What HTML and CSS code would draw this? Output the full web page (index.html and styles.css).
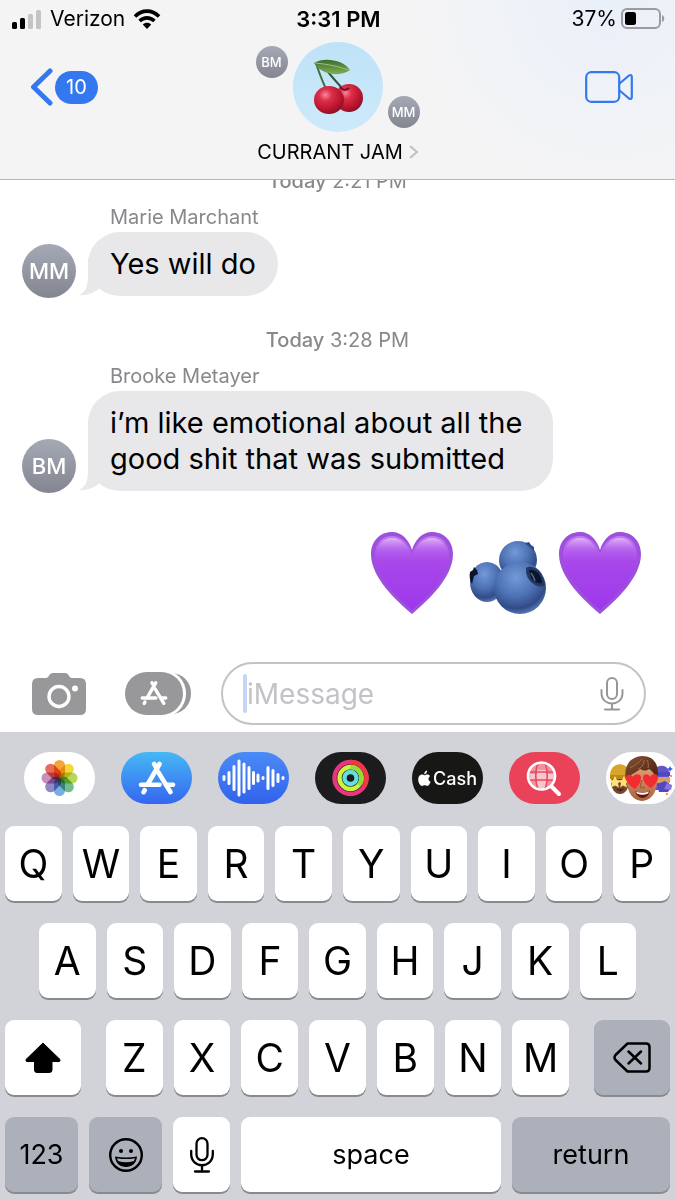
FILE: index.html
```html
<!DOCTYPE html>
<html lang="en">
<head>
    <meta charset="UTF-8">
    <meta name="viewport" content="width=device-width, initial-scale=1.0">
    <title>Messages</title>
    <link rel="stylesheet" href="styles.css">
</head>
<body>
    <svg class="defs" width="0" height="0" aria-hidden="true">
        <defs>
            <linearGradient id="heartFill" x1="0" y1="0" x2="0" y2="1">
                <stop offset="0" stop-color="#c27af0"/>
                <stop offset="0.35" stop-color="#a847ea"/>
                <stop offset="1" stop-color="#9d38ea"/>
            </linearGradient>
            <linearGradient id="heartShine" x1="0" y1="0" x2="0" y2="1">
                <stop offset="0" stop-color="#e3bdf8" stop-opacity="0.9"/>
                <stop offset="0.5" stop-color="#b45cec" stop-opacity="0"/>
            </linearGradient>
            <radialGradient id="berry" cx="0.42" cy="0.3" r="0.7">
                <stop offset="0" stop-color="#7399d8"/>
                <stop offset="0.5" stop-color="#4f74b6"/>
                <stop offset="0.85" stop-color="#324b88"/>
                <stop offset="1" stop-color="#5574b0"/>
            </radialGradient>
            <radialGradient id="cherry" cx="0.38" cy="0.32" r="0.7">
                <stop offset="0" stop-color="#f4899a"/>
                <stop offset="0.3" stop-color="#dd2f49"/>
                <stop offset="0.75" stop-color="#b9142e"/>
                <stop offset="1" stop-color="#8e1029"/>
            </radialGradient>
            <linearGradient id="leaf" x1="0" y1="0" x2="0" y2="1">
                <stop offset="0" stop-color="#3c6b2c"/>
                <stop offset="1" stop-color="#7fae55"/>
            </linearGradient>
            <linearGradient id="face" x1="0" y1="0" x2="0" y2="1">
                <stop offset="0" stop-color="#e8a778"/>
                <stop offset="1" stop-color="#a9623f"/>
            </linearGradient>
            <linearGradient id="hair" x1="0" y1="0" x2="1" y2="1">
                <stop offset="0" stop-color="#885234"/>
                <stop offset="1" stop-color="#43210f"/>
            </linearGradient>
            <symbol id="appstore" viewBox="0 0 38 34">
                <g fill="none" stroke="currentColor" stroke-width="4.6" stroke-linecap="round">
                    <path d="M21.5 3 L9.6 23.5"/>
                    <path d="M16.2 3 L19 7.8"/>
                    <path d="M20.5 11.5 L32.4 31"/>
                    <path d="M3 23.8 H21.5"/>
                    <path d="M29.5 23.8 H35"/>
                    <path d="M6.7 29.2 L5.6 31.2"/>
                </g>
            </symbol>
            <symbol id="heart" viewBox="0 0 82 82">
                <path fill="#9c50dc" d="M41 82 C26 69 0 46 0 22 C0 9 9 0 21 0 C31 0 38 8 41 18 C44 8 51 0 61 0 C73 0 82 9 82 22 C82 46 56 69 41 82 Z"/>
                <path fill="url(#heartFill)" d="M41 78 C27 66 4 45 4 23 C4 11 11 4 21 4 C31 4 38 12 41 22 C44 12 51 4 61 4 C71 4 78 11 78 23 C78 45 55 66 41 78 Z"/>
                <path fill="url(#heartShine)" d="M6 24 C6 12 12 6 21 6 C31 6 37 14 41 25 C45 14 51 6 61 6 C70 6 76 12 76 24 C76 42 6 42 6 24 Z"/>
            </symbol>
        </defs>
    </svg>

    <header class="top">
        <div class="status">
            <div class="status-left">
                <svg class="signal" viewBox="0 0 30 20" aria-hidden="true">
                    <rect x="0" y="13" width="5" height="7" rx="1.5"/>
                    <rect x="8" y="9" width="5" height="11" rx="1.5"/>
                    <rect x="16" y="5" width="5" height="15" rx="1.5" fill="#c4c4c6"/>
                    <rect x="24" y="1" width="5" height="19" rx="1.5" fill="#c4c4c6"/>
                </svg>
                <span>Verizon</span>
                <svg class="wifi" viewBox="0 0 28 20" aria-hidden="true">
                    <g fill="none" stroke="#000" stroke-width="3.6">
                        <path d="M2 7.5 C9 0.3 19 0.3 26 7.5"/>
                        <path d="M6.6 12 C11 7.8 17 7.8 21.4 12"/>
                    </g>
                    <path d="M9.8 15.6 C12 13 16 13 18.2 15.6 L14 20 Z"/>
                </svg>
            </div>
            <div class="clock">3:31 PM</div>
            <div class="status-right">
                <span>37%</span>
                <svg class="battery" viewBox="0 0 44 22" aria-hidden="true">
                    <rect x="1" y="1" width="38" height="19" rx="5" fill="none" stroke="#9b9ca1" stroke-width="2"/>
                    <rect x="4" y="4" width="11" height="13" rx="2.5"/>
                    <path d="M41 7 C44 8 44 13 41 14 Z" fill="#9b9ca1"/>
                </svg>
            </div>
        </div>
        <nav class="nav">
            <button class="back" aria-label="Back, 10 unread">
                <svg class="back-arrow" viewBox="0 0 24 38" aria-hidden="true">
                    <path d="M20 3 L3.5 19 L20 35" fill="none" stroke="currentColor" stroke-width="5" stroke-linecap="round" stroke-linejoin="round"/>
                </svg>
                <span class="count">10</span>
            </button>
            <button class="group">
                <span class="group-avatars">
                    <span class="avatar small">BM</span>
                    <span class="group-photo">
                        <svg viewBox="0 0 50 56" aria-hidden="true">
                            <path d="M3 4 C6 14 9 21 13 30" fill="none" stroke="#3f7040" stroke-width="2"/>
                            <path d="M15 13 C20 19 25 25 31 31" fill="none" stroke="#35583a" stroke-width="2"/>
                            <path d="M1 4 C10 -2 30 0 37 11 C29 17 10 18 1 4 Z" fill="url(#leaf)"/>
                            <path d="M2 4 C13 5 24 7 36 11" fill="none" stroke="#9cbf73" stroke-width="1"/>
                            <circle cx="36" cy="39" r="14" fill="url(#cherry)"/>
                            <ellipse cx="16" cy="41" rx="15" ry="14" fill="url(#cherry)"/>
                            <path d="M27 28 C30 32 34 31 36 29" fill="none" stroke="#6e0e20" stroke-width="2"/>
                        </svg>
                    </span>
                    <span class="avatar small low">MM</span>
                </span>
                <span class="group-name">
                    CURRANT JAM
                    <svg viewBox="0 0 9 14" aria-hidden="true"><path d="M1 1 L8 7 L1 13" fill="none" stroke="#bfbfc3" stroke-width="2"/></svg>
                </span>
            </button>
            <button class="video" aria-label="FaceTime">
                <svg viewBox="0 0 48 32" aria-hidden="true">
                    <g fill="none" stroke="currentColor" stroke-width="2.2" stroke-linejoin="round">
                        <rect x="1.2" y="1.2" width="33" height="29.6" rx="5"/>
                        <path d="M34 13 L44 4.5 Q46.8 3 46.8 6 V26 Q46.8 29 44 27.5 L34 19"/>
                    </g>
                </svg>
            </button>
        </nav>
    </header>

    <main class="chat">
        <p class="stamp"><b>Today</b> 2:21 PM</p>
        <section class="message">
            <div class="sender">Marie Marchant</div>
            <span class="avatar">MM</span>
            <div class="bubble">Yes will do
                <svg class="tail" viewBox="0 0 32 38" aria-hidden="true"><path d="M9 0 V14 C9 27 8 33 0 37 C9 38 16 34 21 30 L30 20 Z"/></svg>
            </div>
        </section>
        <p class="stamp"><b>Today</b> 3:28 PM</p>
        <section class="message">
            <div class="sender">Brooke Metayer</div>
            <span class="avatar">BM</span>
            <div class="bubble">i’m like emotional about all the good shit that was submitted
                <svg class="tail" viewBox="0 0 32 38" aria-hidden="true"><path d="M9 0 V14 C9 27 8 33 0 37 C9 38 16 34 21 30 L30 20 Z"/></svg>
            </div>
        </section>
        <div class="emoji-message">
            <svg class="heart" role="img" aria-label="Purple heart"><use href="#heart"/></svg>
            <svg class="berries" viewBox="0 0 78 74" role="img" aria-label="Blueberries">
                <circle cx="49" cy="20" r="19" fill="url(#berry)"/>
                <path d="M53 1 L56 3 L60 2 L62 5 L65 7 L65 10 L67 13 C64 9 58 5 53 1 Z" fill="#2e4a88"/>
                <ellipse cx="18" cy="42" rx="17" ry="20" fill="url(#berry)"/>
                <path d="M1 32 L4 30 L5 27 L8 30 L9 34 L5 36 L3 44 C1 41 0 36 1 32 Z" fill="#0d1429"/>
                <ellipse cx="51" cy="48" rx="26" ry="26" fill="url(#berry)"/>
                <path d="M57 28 Q60 25 66 28 Q74 32 76 45 Q73 48 66 45 Q56 39 57 28 Z" fill="#243865"/>
                <path d="M60 30 Q65 29 70 34 Q73 38 73 43 Q66 44 62 38 Z" fill="#0c1428"/>
                <path d="M62 33 Q65 37 66 41" fill="none" stroke="#48669d" stroke-width="1.5"/>
            </svg>
            <svg class="heart" role="img" aria-label="Purple heart"><use href="#heart"/></svg>
        </div>
    </main>

    <form class="composer">
        <button type="button" class="camera" aria-label="Camera">
            <svg viewBox="0 0 54 42" aria-hidden="true">
                <path fill="currentColor" d="M6 5 H14 C17 5 17 0 21 0 H33 C37 0 37 5 40 5 H48 Q54 5 54 11 V36 Q54 42 48 42 H6 Q0 42 0 36 V11 Q0 5 6 5 Z"/>
                <circle cx="27" cy="23.5" r="10" fill="none" stroke="#fff" stroke-width="3.4"/>
                <circle cx="43" cy="15.5" r="3" fill="#fff"/>
            </svg>
        </button>
        <button type="button" class="apps" aria-label="Apps">
            <svg viewBox="0 0 66 43" aria-hidden="true">
                <rect x="20" y="1" width="46" height="41" rx="20" fill="currentColor"/>
                <rect x="0" y="-2" width="61" height="47" rx="23" fill="#fff"/>
                <rect x="0" y="0" width="58" height="43" rx="21.5" fill="currentColor"/>
                <use href="#appstore" x="15" y="8.5" width="28" height="25" color="#fff"/>
            </svg>
        </button>
        <label class="field">
            <span class="caret"></span>
            <input type="text" placeholder="iMessage" aria-label="iMessage">
            <svg class="field-mic" viewBox="0 0 24 34" aria-hidden="true">
                <g fill="none" stroke="#97979b" stroke-width="2" stroke-linecap="round">
                    <rect x="7" y="1" width="10" height="21" rx="5"/>
                    <path d="M1.5 13 V16 C1.5 30 22.5 30 22.5 16 V13 M12 27 V32 M5 32.5 H19"/>
                </g>
            </svg>
        </label>
    </form>

    <section class="keyboard">
        <div class="app-strip">
            <button class="app photos" aria-label="Photos">
                <svg viewBox="0 0 71 52" aria-hidden="true">
                    <g class="petals">
                        <rect x="30" y="8" width="11" height="18" rx="5.5" fill="#f5a43b"/>
                        <rect x="30" y="8" width="11" height="18" rx="5.5" fill="#f2d83a" transform="rotate(45 35.5 26)"/>
                        <rect x="30" y="8" width="11" height="18" rx="5.5" fill="#b7d75a" transform="rotate(90 35.5 26)"/>
                        <rect x="30" y="8" width="11" height="18" rx="5.5" fill="#72bd8a" transform="rotate(135 35.5 26)"/>
                        <rect x="30" y="8" width="11" height="18" rx="5.5" fill="#79aee2" transform="rotate(180 35.5 26)"/>
                        <rect x="30" y="8" width="11" height="18" rx="5.5" fill="#9587c1" transform="rotate(225 35.5 26)"/>
                        <rect x="30" y="8" width="11" height="18" rx="5.5" fill="#c78fbd" transform="rotate(270 35.5 26)"/>
                        <rect x="30" y="8" width="11" height="18" rx="5.5" fill="#ea6a5c" transform="rotate(315 35.5 26)"/>
                    </g>
                </svg>
            </button>
            <button class="app store" aria-label="App Store">
                <svg viewBox="0 0 71 52" aria-hidden="true"><use href="#appstore" x="17" y="9" width="38" height="34"/></svg>
            </button>
            <button class="app audio" aria-label="Audio">
                <svg viewBox="0 0 71 52" aria-hidden="true">
                    <path d="M6 24.500v3M11 20.500v11M16 14.500v23M21 9v34M26 12v28M31 15.500v21M35.500 20.500v11M40 23v6M45 25.500v1M50 15.500v21M55 18.500v15M60 22.500v7M65 25.500v1" stroke="#fff" stroke-width="3" stroke-linecap="round"/>
                </svg>
            </button>
            <button class="app fitness" aria-label="Fitness">
                <svg viewBox="0 0 71 52" aria-hidden="true">
                    <g fill="none" stroke-width="4.4">
                        <circle cx="35.5" cy="26" r="16" stroke="#e8357f"/>
                        <path d="M35.5 10 A16 16 0 0 1 49 34.5" stroke="#ee3a3f"/>
                        <circle cx="35.5" cy="26" r="11" stroke="#cdf23f"/>
                        <path d="M35.5 15 A11 11 0 0 1 44 33" stroke="#93db36"/>
                        <circle cx="35.5" cy="26" r="6" stroke="#62e0dc"/>
                    </g>
                </svg>
            </button>
            <button class="app cash" aria-label="Apple Cash">
                <svg viewBox="0 0 14 17" aria-hidden="true">
                    <path fill="#fff" d="M9.8 0 C10 2 8.5 4 6.7 4 C6.5 2 8 0.4 9.8 0 Z M7 5 C8 5 8.7 4.2 10 4.2 C11.3 4.2 12.4 4.9 13.1 5.9 C10.5 7.5 10.9 11 13.6 12.1 C13 13.900 11.5 16.600 10 16.600 C8.900 16.600 8.500 15.900 7.200 15.900 C5.900 15.900 5.500 16.600 4.400 16.600 C2.500 16.600 0.200 13 0.200 9.600 C0.200 6.200 2.300 4.300 4.400 4.300 C5.500 4.300 6.300 5 7 5 Z"/>
                </svg>
                <span>Cash</span>
            </button>
            <button class="app images" aria-label="#images">
                <svg viewBox="0 0 71 52" aria-hidden="true">
                    <circle cx="32.5" cy="24" r="13" fill="#f3919d"/>
                    <path d="M28 18h9v4h7v6h-7v8h-9v-8h-7v-6h7z" fill="#fbd3d8" opacity="0.8"/>
                    <g fill="none" stroke="#fff">
                        <path d="M20 20H45M20 28H45M29 11C26 18 26 30 29 37M36 11C39 18 39 30 36 37" stroke-width="1.6" stroke="#e94a60"/>
                        <circle cx="32.5" cy="24" r="13.5" stroke-width="2.6"/>
                        <path d="M42.5 34.5 L50 42" stroke-width="4" stroke-linecap="round"/>
                    </g>
                </svg>
            </button>
            <button class="app memoji" aria-label="Memoji stickers">
                <svg viewBox="0 0 71 52" aria-hidden="true">
                    <ellipse cx="14" cy="30" rx="9" ry="12" fill="#74472b"/>
                    <path d="M4 25 C3 8 24 8 25 25 Z" fill="#d8a52a"/>
                    <path d="M4 23 H24 V27 H4 Z" fill="#bd891c"/>
                    <path d="M9 24l2 4 4 .5-3 3 1 4-4-2-4 2 1-4-3-3 4-.5zM18 24l2 4 3 .5-3 3 1 4-4-2-3 2 1-4-2-3 3-.5z" fill="#ffe17b"/>
                    <path d="M9 36 Q14 39 18 36 Q15 42 9 36 Z" fill="#2b1714"/>
                    <path d="M49 17 C53 12 61 13 63 19 V38 H49 Z" fill="#6257c8"/>
                    <path d="M49 25h15v6H49z" fill="#d4a062"/>
                    <path d="M50 20h14v4H50zM51 32l8-3 7 5-4 6h-9z" fill="#5348c1"/>
                    <path d="M61 31l5 2-1 5-7-1z" fill="#8b73de"/>
                    <path d="M64 14l1 2 2 1-2 1-1 2-1-2-2-1 2-1z" fill="#3d58e6"/>
                    <circle cx="65" cy="24" r="1" fill="#e66f45"/>
                    <circle cx="61" cy="42" r="1.2" fill="#e7a33c"/>
                    <ellipse cx="36" cy="30" rx="15" ry="19" fill="url(#face)"/>
                    <path d="M20 28 C17 14 24 5 36 4 C49 4 54 14 51 28 C49 22 46 19 43 17 C39 20 36 18 34 17 C30 21 24 22 20 28 Z" fill="url(#hair)"/>
                    <path d="M24 16 C29 14 33 10 36 7 M32 17 C37 15 38 11 38 8 M42 16 C43 13 42 10 41 8" fill="none" stroke="#a56d45" stroke-width="1"/>
                    <path d="M29 37 C23 33 19 29 20 25 C21 22 25 22 27 25 C28 22 34 21 35 25 C35 30 33 33 29 37 Z" fill="#f22c31"/>
                    <path d="M45 36 C39 33 37 29 37 25 C38 21 43 22 44 25 C46 21 51 21 52 25 C52 29 49 33 45 36 Z" fill="#f22c31"/>
                    <path d="M36 28 L34 35 Q36 37 39 35" fill="none" stroke="#955333" stroke-width="1"/>
                    <path d="M29 39 Q36 42 44 39 Q42 46 36 46 Q31 45 29 39 Z" fill="#5e1715"/>
                    <path d="M30 39.500 Q36 42 43 39.500 L42 41.500 Q36 44 31 41.500 Z" fill="#fff"/>
                </svg>
            </button>
        </div>

        <div class="keys">
            <div class="row">
                <button class="key">Q</button>
                <button class="key">W</button>
                <button class="key">E</button>
                <button class="key">R</button>
                <button class="key">T</button>
                <button class="key">Y</button>
                <button class="key">U</button>
                <button class="key">I</button>
                <button class="key">O</button>
                <button class="key">P</button>
            </div>
            <div class="row row-middle">
                <button class="key">A</button>
                <button class="key">S</button>
                <button class="key">D</button>
                <button class="key">F</button>
                <button class="key">G</button>
                <button class="key">H</button>
                <button class="key">J</button>
                <button class="key">K</button>
                <button class="key">L</button>
            </div>
            <div class="row row-shift">
                <button class="key" aria-label="Shift">
                    <svg class="icon-shift" viewBox="0 0 36 31" aria-hidden="true">
                        <path d="M18 1 L35 17.5 Q35.5 19.5 34 19.5 H27 V28 Q27 30.5 24.5 30.5 H12 Q9.5 30.5 9.5 28 V19.5 H2 Q0.5 19.5 1 17.5 Z" stroke="#000" stroke-linejoin="round"/>
                    </svg>
                </button>
                <div class="row">
                    <button class="key">Z</button>
                    <button class="key">X</button>
                    <button class="key">C</button>
                    <button class="key">V</button>
                    <button class="key">B</button>
                    <button class="key">N</button>
                    <button class="key">M</button>
                </div>
                <button class="key dark" aria-label="Delete">
                    <svg class="icon-delete" viewBox="0 0 38 31" aria-hidden="true">
                        <g fill="none" stroke="#000" stroke-width="2.5" stroke-linecap="round" stroke-linejoin="round">
                            <path d="M14.5 1.5 H33 Q36.5 1.5 36.5 5 V26 Q36.5 29.5 33 29.5 H14.5 L2.5 18 Q0.5 15.5 2.5 13 Z"/>
                            <path d="M15.5 9.5 L28 21.5 M28 9.5 L15.5 21.5"/>
                        </g>
                    </svg>
                </button>
            </div>
            <div class="row row-bottom">
                <button class="key dark word">123</button>
                <button class="key dark" aria-label="Emoji">
                    <svg class="icon-emoji" viewBox="0 0 34 34" aria-hidden="true">
                        <circle cx="17" cy="17" r="15.8" fill="none" stroke="#000" stroke-width="2.4"/>
                        <circle cx="12" cy="13" r="2"/>
                        <circle cx="22" cy="13" r="2"/>
                        <path d="M6 18.5 Q17 20.5 28 18.5 C27.5 25 23 29 17 29 C11 29 6.5 25 6 18.5 Z"/>
                        <path d="M8 20.2 Q17 22 26 20.2 L25 23 Q17 25.5 9 23 Z" fill="#acb0bb"/>
                    </svg>
                </button>
                <button class="key" aria-label="Dictate">
                    <svg class="icon-mic" viewBox="0 0 24 36" aria-hidden="true">
                        <g fill="none" stroke="#000" stroke-width="2.3" stroke-linecap="round">
                            <rect x="6.5" y="1.2" width="11" height="22" rx="5.5"/>
                            <path d="M1.2 14 V17 C1.2 32 22.8 32 22.8 17 V14 M12 28.5 V34 M5 34.5 H19"/>
                        </g>
                    </svg>
                </button>
                <button class="key word">space</button>
                <button class="key dark word">return</button>
            </div>
        </div>
    </section>
</body>
</html>
```

FILE: styles.css
```css
:root {
    --blue: #3478f0;
    --bar: #f4f4f5;
    --bubble: #e8e8eb;
    --muted: #88888c;
    --icon: #98989a;
    --keyboard: #d1d3d9;
    --key-dark: #acb0bb;
}

* {
    margin: 0;
    padding: 0;
    box-sizing: border-box;
}

body {
    height: 100vh;
    display: flex;
    flex-direction: column;
    overflow: hidden;
    background: #fff;
    color: #000;
    font-family: Inter, "Liberation Sans", sans-serif;
}

button {
    border: none;
    background: none;
    color: inherit;
    font: inherit;
    cursor: pointer;
}

svg {
    display: block;
}

.defs {
    position: absolute;
}

/* Header */
.top {
    flex: none;
    background: radial-gradient(circle at 90% 0, #eaf0f9, var(--bar) 30%);
    border-bottom: 1px solid #b4b4b8;
}

.status {
    height: 37px;
    display: grid;
    grid-template-columns: 1fr auto 1fr;
    align-items: center;
    padding: 0 10px 0 12px;
    font-size: 21px;
    line-height: 24px;
}

.status-left,
.status-right {
    display: flex;
    align-items: center;
    gap: 8px;
}

.status-right {
    justify-content: flex-end;
    gap: 4px;
}

.clock {
    font-size: 22px;
    font-weight: 600;
}

.signal {
    width: 30px;
    height: 20px;
}

.wifi {
    width: 28px;
    height: 20px;
}

.battery {
    width: 44px;
    height: 22px;
}

.nav {
    display: grid;
    grid-template-columns: 1fr auto 1fr;
    padding: 5px 30px 15px;
}

.back {
    height: 90px;
    justify-self: start;
    display: flex;
    align-items: center;
    gap: 1px;
    color: var(--blue);
}

.back-arrow {
    width: 24px;
    height: 38px;
}

.count {
    padding: 0 11px;
    border-radius: 17px;
    background: var(--blue);
    color: #fff;
    font-size: 20px;
    line-height: 33px;
}

.video {
    height: 90px;
    justify-self: end;
    margin-right: 12px;
    color: var(--blue);
}

.video svg {
    width: 48px;
    height: 32px;
}

.group {
    display: flex;
    flex-direction: column;
    align-items: center;
    gap: 8px;
}

.group-avatars {
    display: flex;
    gap: 5px;
}

.group-photo {
    width: 90px;
    height: 90px;
    display: grid;
    place-items: center;
    border-radius: 50%;
    background: linear-gradient(#bfe2f7, #cdeafb);
}

.group-photo svg {
    width: 50px;
    height: 56px;
}

.group-name {
    display: flex;
    align-items: center;
    gap: 6px;
    font-size: 20px;
    line-height: 24px;
}

.group-name svg {
    width: 9px;
    height: 14px;
}

.avatar {
    width: 54px;
    height: 54px;
    display: grid;
    place-items: center;
    border-radius: 50%;
    background: linear-gradient(#a5a9b6, #838690);
    color: #fff;
    font-size: 22px;
    font-weight: 500;
}

.avatar.small {
    width: 32px;
    height: 32px;
    margin-top: 4px;
    font-size: 13px;
}

.avatar.small.low {
    align-self: flex-end;
    margin: 0 0 4px;
}

/* Conversation, anchored to the newest message */
.chat {
    flex: 1;
    min-height: 0;
    display: flex;
    flex-direction: column;
    justify-content: flex-end;
    overflow: hidden;
    padding: 0 34px 48px 22px;
}

.stamp {
    margin: 32px 0 12px 12px;
    color: var(--muted);
    font-size: 20px;
    line-height: 24px;
    text-align: center;
}

.stamp b {
    font-weight: 500;
}

.message {
    display: grid;
    grid-template-columns: 54px auto;
    justify-content: start;
    align-items: end;
    column-gap: 12px;
}

.message .avatar {
    margin-bottom: -2px;
}

.sender {
    grid-column: 2;
    padding: 0 22px;
    margin-bottom: 3px;
    color: var(--muted);
    font-size: 20px;
    line-height: 24px;
}

.bubble {
    position: relative;
    justify-self: start;
    max-width: 465px;
    padding: 14px 22px;
    border-radius: 32px;
    background: var(--bubble);
    font-size: 29px;
    line-height: 36px;
}

.tail {
    position: absolute;
    left: -9px;
    bottom: 0;
    width: 32px;
    height: 38px;
    fill: var(--bubble);
}

.emoji-message {
    display: flex;
    justify-content: flex-end;
    align-items: flex-end;
    gap: 12px;
    margin-top: 41px;
}

.heart {
    width: 82px;
    height: 82px;
}

.berries {
    width: 78px;
    height: 74px;
    margin-left: 4px;
}

/* Composer */
.composer {
    flex: none;
    display: flex;
    align-items: center;
    padding: 0 29px 7px 32px;
    color: var(--icon);
}

.camera svg {
    width: 54px;
    height: 42px;
}

.apps {
    margin: 0 30px 0 39px;
}

.apps svg {
    width: 66px;
    height: 43px;
}

.field {
    flex: 1;
    min-width: 0;
    height: 63px;
    display: flex;
    align-items: center;
    padding: 0 20px;
    border: 2px solid #c3c3c6;
    border-radius: 32px;
}

.caret {
    width: 4px;
    height: 39px;
    border-radius: 2px;
    background: #c6d4f8;
}

.field input {
    flex: 1;
    min-width: 0;
    border: none;
    outline: none;
    background: none;
    font: inherit;
    font-size: 28px;
}

.field input::placeholder {
    color: #c3c3c7;
}

.field-mic {
    width: 24px;
    height: 34px;
}

/* Keyboard */
.keyboard {
    flex: none;
    background: var(--keyboard);
}

.app-strip {
    display: flex;
    gap: 26px;
    padding: 20px 0 22px 24px;
    overflow: hidden;
}

.app {
    flex: none;
    width: 71px;
    height: 52px;
    display: flex;
    align-items: center;
    justify-content: center;
    border-radius: 26px;
    background: #fff;
    color: #fff;
    overflow: hidden;
}

.app > svg {
    width: 71px;
    height: 52px;
}

.petals rect {
    mix-blend-mode: multiply;
}

.app.store {
    background: linear-gradient(#46b8f5, #3566ef);
}

.app.audio {
    background: linear-gradient(#4a8bf7, #3262eb);
}

.app.fitness {
    background: #1c1c1e;
}

.app.cash {
    gap: 2px;
    background: #171716;
    font-size: 18px;
    font-weight: 500;
}

.app.cash svg {
    width: 13px;
    height: 17px;
}

.app.images {
    background: #e94259;
}

.keys {
    display: flex;
    flex-direction: column;
    gap: 22px;
    padding: 0 5px 8px;
}

.row {
    display: flex;
    gap: 11px;
}

.row-middle {
    padding: 0 34px;
}

.row-shift {
    display: grid;
    grid-template-columns: 76fr 463fr 76fr;
    gap: 25px;
}

.row-bottom {
    display: grid;
    grid-template-columns: 73fr 73fr 57fr 260fr 158fr;
}

.key {
    flex: 1;
    min-width: 0;
    height: 75px;
    display: flex;
    align-items: center;
    justify-content: center;
    border-radius: 9px;
    background: #fff;
    box-shadow: 0 2px 0 #898a8d;
    font-size: 39px;
}

.key.dark {
    background: var(--key-dark);
}

.key.word {
    font-size: 27px;
}

.icon-shift {
    width: 36px;
    height: 31px;
}

.icon-delete {
    width: 38px;
    height: 31px;
}

.icon-emoji {
    width: 34px;
    height: 34px;
}

.icon-mic {
    width: 24px;
    height: 36px;
}
```
